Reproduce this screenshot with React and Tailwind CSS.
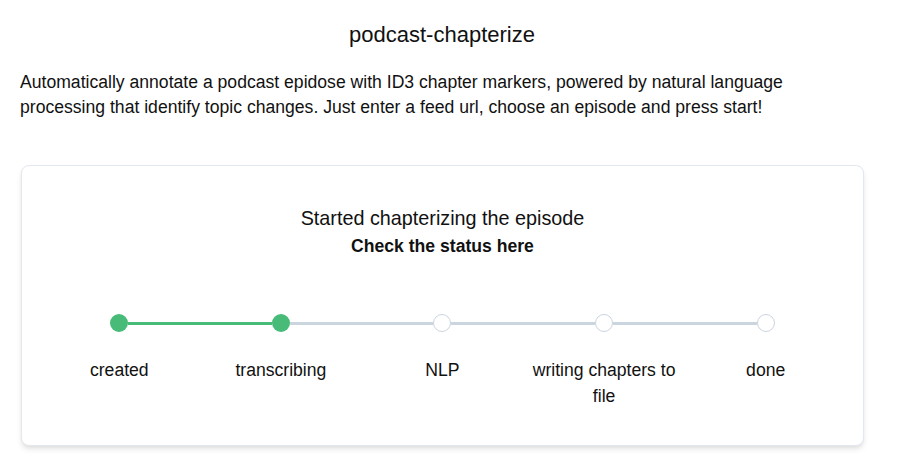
import React from 'react';

const steps = [
  { label: 'created', done: true },
  { label: 'transcribing', done: true },
  { label: 'NLP', done: false },
  { label: 'writing chapters to file', done: false },
  { label: 'done', done: false },
];

const Stepper = () => (
  <div className="flex w-[808px] mx-auto">
    {steps.map((step, i) => {
      const leftDone = i > 0 && step.done;
      const rightDone = i < steps.length - 1 && steps[i + 1].done;
      return (
        <div key={step.label} className="flex flex-1 flex-col items-center">
          <div className="flex h-[20px] w-full items-center">
            <div
              className={
                i === 0
                  ? 'h-[3px] flex-1'
                  : leftDone
                  ? 'h-[3px] flex-1 bg-[#48bb78]'
                  : 'h-[3px] flex-1 bg-[#cbd5e0]'
              }
            />
            <div
              className={
                step.done
                  ? 'h-[18px] w-[18px] shrink-0 rounded-full bg-[#48bb78]'
                  : 'h-[18px] w-[18px] shrink-0 rounded-full border border-[#cbd5e0] bg-white'
              }
            />
            <div
              className={
                i === steps.length - 1
                  ? 'h-[3px] flex-1'
                  : rightDone
                  ? 'h-[3px] flex-1 bg-[#48bb78]'
                  : 'h-[3px] flex-1 bg-[#cbd5e0]'
              }
            />
          </div>
          <div className="mt-[24px] px-[4px] text-center text-[17.6px] leading-[26px]">
            {step.label}
          </div>
        </div>
      );
    })}
  </div>
);

export default function App() {
  return (
    <div className="min-h-screen bg-white pl-5 pr-[33px] font-['Liberation_Sans',Arial,sans-serif] text-[#111]">
      <h1 className="pt-[21px] text-center text-[22px] leading-7">podcast-chapterize</h1>
      <p className="mt-[21px] text-[17.6px] leading-[25px]">
        Automatically annotate a podcast epidose with ID3 chapter markers, powered by natural language
        processing that identify topic changes. Just enter a feed url, choose an episode and press start!
      </p>
      <div className="ml-[1px] mt-[45px] h-[281px] rounded-lg border border-[#e2e8f0] bg-white pt-[38px] shadow-[0_4px_6px_-1px_rgba(0,0,0,0.1),0_2px_4px_-1px_rgba(0,0,0,0.06)]">
        <div className="text-center text-[19.8px] leading-7">Started chapterizing the episode</div>
        <div className="mt-[2px] text-center text-[17.6px] font-bold leading-6">Check the status here</div>
        <div className="mt-[55px]">
          <Stepper />
        </div>
      </div>
    </div>
  );
}
